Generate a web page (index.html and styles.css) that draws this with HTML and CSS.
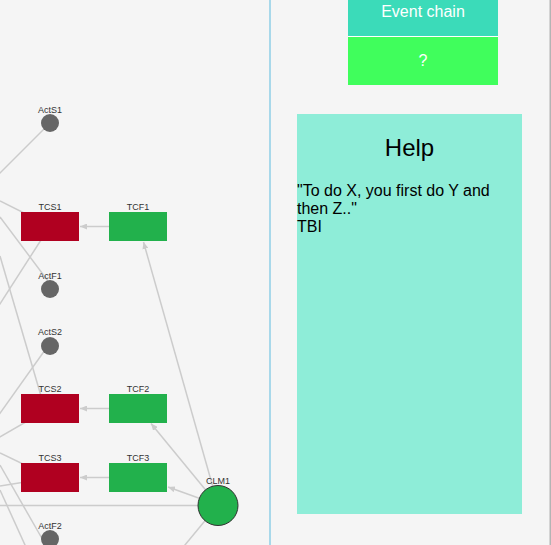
FILE: index.html
```html
<!DOCTYPE html>
<html>
<head>
<meta charset="utf-8">
<link rel="stylesheet" href="styles.css">
</head>
<body>
<div class="app">
  <div class="graph">
    <svg width="269" height="545" viewBox="0 0 269 545">
      <defs>
        <marker id="arr" markerUnits="userSpaceOnUse" markerWidth="8" markerHeight="6" refX="7" refY="3" orient="auto">
          <path d="M0,0 L7,3 L0,6 z" fill="#cccccc"/>
        </marker>
      </defs>
      <g class="edges">
        <line x1="50" y1="123" x2="-2" y2="175"/>
        <line x1="0" y1="201" x2="50" y2="226"/>
        <line x1="0" y1="217" x2="48" y2="281"/>
        <line x1="50" y1="226" x2="-2" y2="307"/>
        <line x1="0" y1="256" x2="46" y2="413"/>
        <line x1="50" y1="343" x2="-2" y2="416"/>
        <line x1="50" y1="408" x2="-2" y2="438"/>
        <line x1="0" y1="453" x2="50" y2="477"/>
        <line x1="0" y1="486" x2="50" y2="478"/>
        <line x1="0" y1="505.5" x2="218" y2="505.5"/>
        <line x1="0" y1="465" x2="44" y2="542"/>
        <line x1="0" y1="490" x2="30" y2="556"/>
        <line x1="218" y1="505" x2="180" y2="551"/>
        <line x1="218" y1="505" x2="143.5" y2="242" marker-end="url(#arr)"/>
        <line x1="218" y1="505" x2="151" y2="423.5" marker-end="url(#arr)"/>
        <line x1="218" y1="505" x2="168" y2="487" marker-end="url(#arr)"/>
        <line x1="109" y1="226.5" x2="80" y2="226.5" marker-end="url(#arr)"/>
        <line x1="109" y1="408.5" x2="80" y2="408.5" marker-end="url(#arr)"/>
        <line x1="109" y1="477.5" x2="80" y2="477.5" marker-end="url(#arr)"/>
      </g>
      <g class="nodes">
        <circle class="act" cx="50" cy="123" r="9"/>
        <text x="50" y="113">ActS1</text>
        <circle class="act" cx="50" cy="289" r="9"/>
        <text x="50" y="279">ActF1</text>
        <circle class="act" cx="50" cy="346" r="9"/>
        <text x="50" y="335">ActS2</text>
        <circle class="act" cx="50" cy="539" r="9"/>
        <text x="50" y="529">ActF2</text>

        <rect class="tcs" x="21" y="212" width="58" height="29"/>
        <text x="50" y="210">TCS1</text>
        <rect class="tcf" x="109" y="212" width="58" height="29"/>
        <text x="138" y="210">TCF1</text>

        <rect class="tcs" x="21" y="394" width="58" height="29"/>
        <text x="50" y="392">TCS2</text>
        <rect class="tcf" x="109" y="394" width="58" height="29"/>
        <text x="138" y="392">TCF2</text>

        <rect class="tcs" x="21" y="463" width="58" height="29"/>
        <text x="50" y="461">TCS3</text>
        <rect class="tcf" x="109" y="463" width="58" height="29"/>
        <text x="138" y="461">TCF3</text>

        <text x="218" y="484">CLM1</text>
        <circle class="clm" cx="218" cy="505.5" r="20"/>
      </g>
    </svg>
  </div>
  <div class="divider"></div>
  <div class="side">
    <div class="btn btn-chain">Event chain</div>
    <div class="btn btn-q">?</div>
    <div class="help">
      <h2 class="help-title">Help</h2>
      <p class="help-text">"To do X, you first do Y and then Z.."<br>TBI</p>
    </div>
  </div>
  <div class="scroll-edge"></div>
</div>
</body>
</html>
```
FILE: styles.css
```css
html, body {
  margin: 0;
  padding: 0;
  height: 545px;
  overflow: hidden;
  background: #f5f5f5;
  font-family: "Liberation Sans", Arial, sans-serif;
}

.app {
  display: flex;
  height: 545px;
}

.graph {
  width: 269px;
  flex: none;
}

.graph svg {
  display: block;
}

.edges line {
  stroke: #cccccc;
  stroke-width: 1.5;
}

.nodes text {
  font-family: "Liberation Sans", Arial, sans-serif;
  font-size: 9px;
  fill: #333333;
  text-anchor: middle;
}

.act {
  fill: #666666;
}

.tcs {
  fill: #b00020;
}

.tcf {
  fill: #22b14c;
}

.clm {
  fill: #22b14c;
  stroke: #333333;
  stroke-width: 1;
}

.divider {
  width: 2px;
  flex: none;
  background: #a8d8ea;
}

.side {
  width: 278px;
  flex: none;
  display: flex;
  flex-direction: column;
}

.btn {
  width: 150px;
  height: 48px;
  margin-left: 77px;
  display: flex;
  align-items: center;
  justify-content: center;
  color: #ffffff;
  font-size: 16px;
}

.btn-chain {
  margin-top: -12px;
  background: #3bdbb9;
}

.btn-q {
  border-top: 1px solid #ffffff;
  background: #40fe5c;
}

.help {
  width: 225px;
  height: 400px;
  margin-top: 29px;
  margin-left: 26px;
  background: #8eedd8;
  color: #000000;
}

.help-title {
  margin: 20px 0 0 0;
  font-size: 24px;
  font-weight: normal;
  text-align: center;
}

.help-text {
  margin: 20px 0 0 0;
  font-size: 16px;
}

.scroll-edge {
  width: 1px;
  flex: none;
  border-left: 1px solid #d4d4d4;
  background: #b4b4b4;
}
```
